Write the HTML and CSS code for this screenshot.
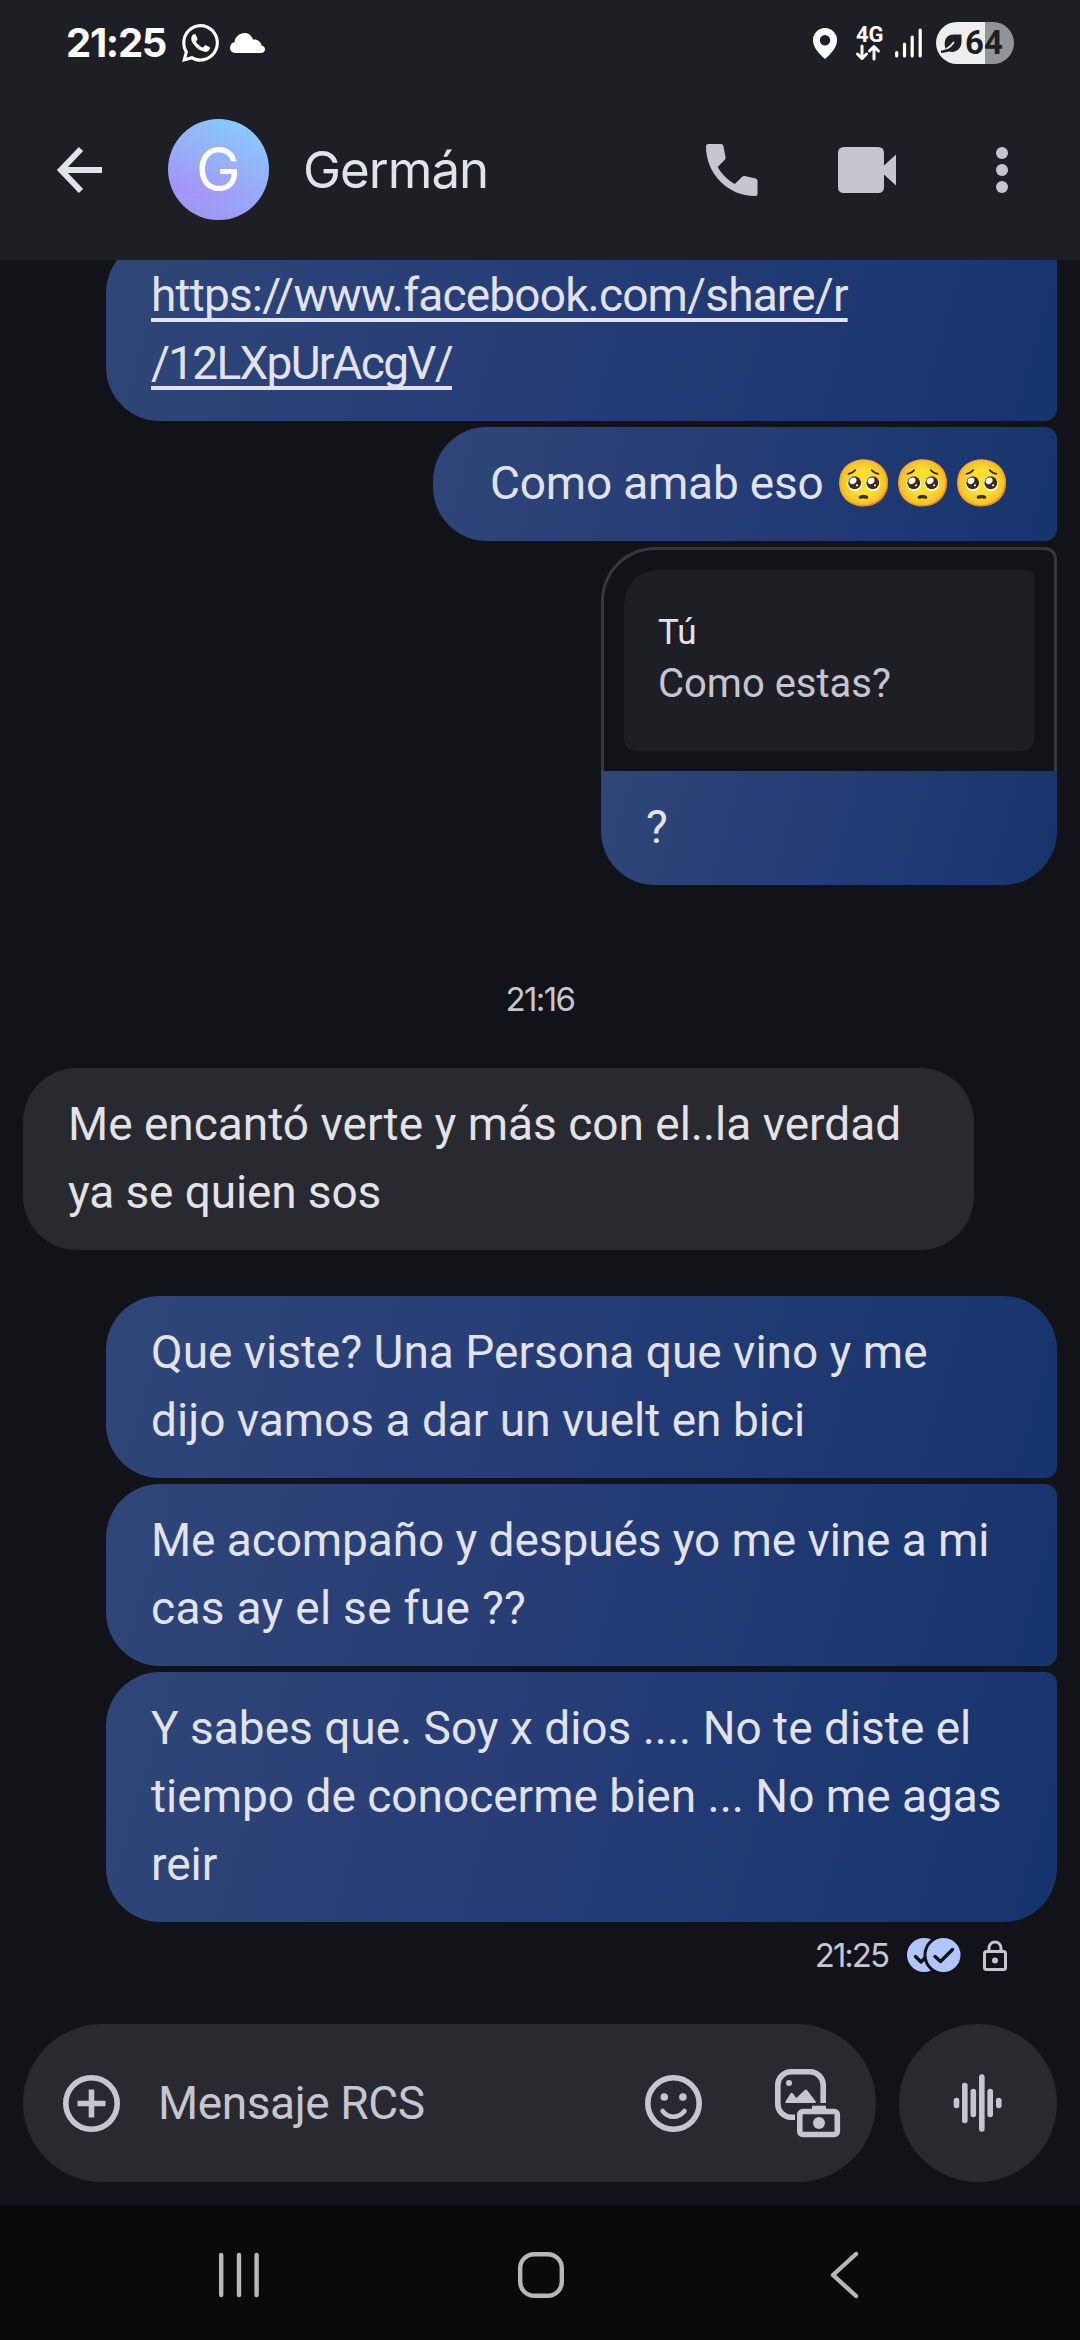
FILE: index.html
```html
<!DOCTYPE html>
<html lang="es">
<head>
<meta charset="utf-8">
<title>Germán</title>
<link rel="stylesheet" href="styles.css">
</head>
<body>
<div class="phone">
  <header class="header">
    <div class="status">
      <span class="clock">21:25</span>
      <svg class="wa" width="37" height="38" viewBox="0 0 24 24" preserveAspectRatio="none"><path d="M.057 24l1.687-6.163c-1.041-1.804-1.588-3.849-1.587-5.946.003-6.556 5.338-11.891 11.893-11.891 3.181.001 6.167 1.24 8.413 3.488 2.245 2.248 3.481 5.236 3.48 8.414-.003 6.557-5.338 11.892-11.893 11.892-1.99-.001-3.951-.5-5.688-1.448l-6.305 1.654zm6.597-3.807c1.676.995 3.276 1.591 5.392 1.592 5.448 0 9.886-4.434 9.889-9.885.002-5.462-4.415-9.89-9.881-9.892-5.452 0-9.887 4.434-9.889 9.884-.001 2.225.651 3.891 1.746 5.634l-.999 3.648 3.742-.981zm11.387-5.464c-.074-.124-.272-.198-.57-.347-.297-.149-1.758-.868-2.031-.967-.272-.099-.47-.149-.669.149-.198.297-.768.967-.941 1.165-.173.198-.347.223-.644.074-.297-.149-1.255-.462-2.39-1.475-.883-.788-1.48-1.761-1.653-2.059-.173-.297-.018-.458.13-.606.134-.133.297-.347.446-.521.151-.172.2-.296.3-.495.099-.198.05-.372-.025-.521-.075-.148-.669-1.611-.916-2.206-.242-.579-.487-.501-.669-.51l-.57-.01c-.198 0-.52.074-.792.372s-1.04 1.016-1.04 2.479 1.065 2.876 1.213 3.074c.149.198 2.095 3.2 5.076 4.487.709.306 1.263.489 1.694.626.712.226 1.36.194 1.872.118.571-.085 1.758-.719 2.006-1.413.248-.695.248-1.29.173-1.414z"/></svg>
      <svg class="cloud" width="35" height="20" viewBox="0 0 35 20"><path d="M5 20A5 5 0 0 1 0 15C0 11.800 1.800 9.500 4.500 9.200C5 4 9.500 0 14.800 0C18.500 0 21.600 2.600 23 6.500C27.500 6 31 8.800 31.600 12.500C33.700 12.800 35 14.300 35 16.300C35 18.500 33.400 20 31.300 20Z"/></svg>
      <svg class="pin" width="24" height="31" viewBox="0 0 24 31"><path fill-rule="evenodd" d="M12 0A12 12 0 0 1 24 12.500C24 18 20 24 12 31C4 24 0 18 0 12.500A12 12 0 0 1 12 0ZM12 7A5.200 5.200 0 0 0 12 17.400A5.200 5.200 0 0 0 12 7Z"/></svg>
      <div class="net"><span>4G</span>
        <svg width="24" height="15" viewBox="0 0 24 15"><path class="line" d="M6 1V13.500M1.500 9L6 13.500L10.500 9M18 14V1.500M13.500 6L18 1.500L22.500 6"/></svg>
      </div>
      <svg class="bars" width="27" height="30" viewBox="0 0 27 30"><path class="line" d="M1.700 24.500V28M9.500 16V28M17.200 9V28M25.200 2V28"/></svg>
      <div class="battery">
        <svg width="21" height="19" viewBox="0 0 21 19"><path d="M4 13C2.500 5 6.500 .5 13 .5H20.500V8C20.500 15 14 19.500 8 17.500C5.500 18 3.500 18.800 0 19V16.500Q2.500 16.500 5 15.200Z"/><path class="vein" d="M6 14.500Q10 12.500 12.500 8.500"/></svg>
        <span>64</span>
      </div>
    </div>
    <div class="toolbar">
      <svg width="46" height="46" viewBox="0 0 46 46"><path class="back" d="M45 23H4M24 2L4 23L24 44"/></svg>
      <div class="avatar">G</div>
      <h1 class="name">Germán</h1>
      <div class="actions">
        <svg width="52" height="52" viewBox="0 0 52 52"><path d="M2.500 0H15Q17 0 17.400 2L19.600 13.500Q19.800 14.800 18.800 15.800L11.700 23C16 30.500 21.500 36 28.900 40L36.200 32.800Q37.200 31.800 38.500 32.100L49.600 34.400Q51.500 34.900 51.500 36.800V49.500Q51.500 52 49 52C22 52 0 30 0 2.500Q0 0 2.500 0Z"/></svg>
        <svg width="58" height="46" viewBox="0 0 58 46"><path d="M6 0H40Q46 0 46 6V18.500L58 7.500V38.500L46 27.500V40Q46 46 40 46H6Q0 46 0 40V6Q0 0 6 0Z"/></svg>
        <svg width="12" height="46" viewBox="0 0 12 46"><circle cx="6" cy="6" r="6"/><circle cx="6" cy="23" r="6"/><circle cx="6" cy="40" r="6"/></svg>
      </div>
    </div>
  </header>

  <main class="chat">
    <div class="bubble out top-cut"><a class="l-url1">https://www.facebook.com/share/r</a><br><a class="l-url2">/12LXpUrAcgV/</a></div>
    <div class="bubble out join short"><span class="l-amab">Como amab eso</span> <span class="emoji">🥺🥺🥺</span></div>
    <div class="reply">
      <div class="quote-frame">
        <div class="quote">
          <div class="quote-name">Tú</div>
          <div class="quote-text">Como estas?</div>
        </div>
      </div>
      <div class="bubble out reply-text">?</div>
    </div>
    <div class="time-sep">21:16</div>
    <div class="bubble in">Me encantó verte y más con el..la verdad<br><span class="l-quien">ya se quien sos</span></div>
    <div class="bubble out first">Que viste? Una Persona que vino y me<br>dijo vamos a dar un vuelt en bici</div>
    <div class="bubble out join"><span class="l-acomp">Me acompaño y después yo me vine a mi</span><br><span class="l-cas">cas ay el se fue ??</span></div>
    <div class="bubble out last">Y sabes que. Soy x dios .... No te diste el<br>tiempo de conocerme bien ... No me agas<br>reir</div>
    <div class="receipt">
      <span>21:25</span>
      <svg class="checks" width="54" height="34" viewBox="0 0 54 34"><circle cx="17" cy="17" r="17"/><path class="tick" d="M8.500 18.500L14 24L26 11.500"/><circle class="ring" cx="36.500" cy="17" r="18.500"/><path class="tick" d="M28 18.500L33.500 23.500L45.500 11.500"/></svg>
      <svg width="24" height="31" viewBox="0 0 24 31"><rect class="lock" x="1.500" y="11.500" width="21" height="18" rx="2"/><path class="lock" d="M6 11.500V8A6 6 0 0 1 18 8V11.500"/><circle cx="12" cy="20.500" r="3"/></svg>
    </div>
  </main>

  <div class="composer">
    <div class="input">
      <svg width="57" height="57" viewBox="0 0 57 57"><circle class="ico" cx="28.500" cy="28.500" r="25.700"/><path class="ico" d="M28.500 14.500V42.500M14.500 28.500H42.500"/></svg>
      <span class="hint">Mensaje RCS</span>
      <svg class="smile" width="57" height="57" viewBox="0 0 57 57"><circle class="ico" cx="28.500" cy="28.500" r="25.700"/><circle cx="19.300" cy="22" r="3.800"/><circle cx="37.900" cy="22" r="3.800"/><path class="grin" d="M17.500 36Q22 41.700 28.500 41.700T39.500 36"/></svg>
      <svg width="65" height="68" viewBox="0 0 65 68"><path class="ico" d="M48.200 34V16A13.200 13.200 0 0 0 35 2.800H16A13.200 13.200 0 0 0 2.800 16V35A13.200 13.200 0 0 0 16 48.200H20"/><circle cx="14" cy="14" r="3"/><path d="M11.500 34Q9.500 34 10.600 32.300L15.500 24.500Q16.700 23 17.900 24.500L21.300 29L29.500 21.300Q31 19.800 32.400 21.500L40.400 32Q41.600 34 39.500 34Z"/><rect class="ico" x="24.800" y="42.500" width="37.500" height="23" rx="3"/><rect x="37" y="36.700" width="14" height="5"/><circle cx="44" cy="54" r="6"/></svg>
    </div>
    <div class="voice">
      <svg width="50" height="58" viewBox="0 0 50 58"><path class="ico" d="M3.500 26.500V31.500M11.800 11.500V46.500M20.300 17.500V40.500M28.800 3V55M37.200 17.500V40.500M45.800 26.500V31.500"/></svg>
    </div>
  </div>

  <nav class="nav">
    <svg width="40" height="44" viewBox="0 0 40 44"><path class="nv" d="M2.200 2V42M20 2V42M37.600 2V42"/></svg>
    <svg class="home" width="46" height="46" viewBox="0 0 46 46"><rect class="nv" x="2.200" y="2.200" width="41.600" height="41.600" rx="14"/></svg>
    <svg width="29" height="46" viewBox="0 0 29 46"><path class="nv" d="M26 2L3 23L26 44"/></svg>
  </nav>
</div>
</body>
</html>
```
FILE: styles.css
```css
* { box-sizing: border-box; }

body {
  margin: 0;
  background: #111318;
  color: #e3e2e6;
  font-family: Roboto, "Noto Color Emoji", sans-serif;
}

svg { display: block; flex: none; fill: #c6c6d0; overflow: visible; }

.phone {
  width: 1080px;
  height: 2340px;
  display: flex;
  flex-direction: column;
  overflow: hidden;
}

/* header */
.header { height: 260px; flex: none; background: #1e1f24; position: relative; z-index: 1; }

.status {
  height: 86px;
  padding: 0 66px 0 66px;
  display: flex;
  align-items: center;
}
.status svg { fill: #fff; }
.clock {
  width: 116px;
  font: 700 40px/86px Inter, sans-serif;
  letter-spacing: -1.3px;
  color: #fff;
}
.cloud { margin-left: 11px; }
.pin { margin-left: auto; }
.net { width: 26px; margin-left: 19px; color: #fff; font-weight: 700; font-size: 22px; line-height: 17px; }
.net span { display: block; }
.net svg { margin-top: 2px; }
.line { fill: none; stroke: #fff; stroke-width: 3; stroke-linecap: round; stroke-linejoin: round; }
.bars { margin-left: 13px; }
.bars .line { stroke-width: 3.2; }
.battery {
  width: 78px;
  height: 42px;
  margin-left: 14px;
  padding-left: 5px;
  border-radius: 21px;
  background: linear-gradient(90deg, #eee 49px, #939495 49px);
  display: flex;
  align-items: center;
  gap: 3px;
  color: #1e1f24;
  font-weight: 700;
  font-size: 33px;
  line-height: 42px;
}
.battery svg { fill: #1e1f24; }
.battery .vein { fill: none; stroke: #eee; stroke-width: 1.8; stroke-linecap: round; }

.toolbar { height: 168px; padding: 0 72px 0 57px; display: flex; align-items: center; }
.back { fill: none; stroke: #e3e2e6; stroke-width: 6; }
.avatar {
  width: 101px;
  height: 101px;
  margin: 0 0 1px 65px;
  border-radius: 50%;
  background:
    radial-gradient(circle at 48% -12%, transparent 94px, rgba(130, 200, 250, .18) 95px),
    linear-gradient(205deg, #86cdfb 8%, #9aa9f8 52%, #a98af6 88%);
  color: #fff;
  font: 400 60px/100px Inter, sans-serif;
  text-align: center;
}
.name { margin: 0 0 0 34px; font: 400 51px/100px Inter, sans-serif; letter-spacing: -1px; }
.actions { margin-left: auto; display: flex; align-items: center; }
.actions svg + svg { margin-left: 80px; }
.actions svg:last-child { margin-left: 100px; }

/* conversation */
.chat {
  flex: 1;
  min-height: 0;
  padding: 0 23px;
  display: flex;
  flex-direction: column;
  align-items: flex-end;
}
.bubble {
  width: 951px;
  flex: none;
  padding: 22px 0 24px 45px;
  border-radius: 54px;
  font-size: 46px;
  line-height: 68px;
  white-space: nowrap;
}
.out { background: linear-gradient(106deg, #2f4678 0%, #263d76 45%, #17356d 97%); color: #e1e2ee; }
.in { background: #292a2f; align-self: flex-start; }
.top-cut { margin-top: -21px; border-radius: 54px 12px 12px 54px; }
.join { margin-top: 6px; border-radius: 54px 12px 12px 54px; }
.first { margin-top: 46px; border-radius: 54px 54px 12px 54px; }
.last { margin-top: 6px; border-radius: 54px 12px 54px 54px; }
.short { width: 624px; height: 114px; padding-left: 57px; }
.bubble a { text-decoration: underline 4px; text-decoration-skip-ink: none; text-underline-offset: 7px; }
.l-url1 { letter-spacing: -.83px; }
.l-url2 { letter-spacing: -1.75px; }
.l-amab { letter-spacing: -.2px; }
.l-quien { letter-spacing: -.12px; }
.l-acomp { letter-spacing: -.08px; }
.l-cas { letter-spacing: .3px; }
.emoji { letter-spacing: 2px; line-height: 1; }

.reply { width: 456px; margin-top: 6px; flex: none; }
.quote-frame {
  height: 224px;
  padding: 20px;
  border: 3px solid #37383c;
  border-bottom: 0;
  border-radius: 54px 12px 0 0;
}
.quote {
  height: 181px;
  padding: 40px 33px 0 34px;
  border-radius: 34px 6px 12px 12px;
  background: #1e1f24;
}
.quote-name { font-size: 35px; line-height: 46px; }
.quote-text { font-size: 40px; line-height: 55px; color: #c6c6d0; }
.reply-text { width: 100%; border-radius: 0 0 54px 54px; }

.time-sep {
  align-self: stretch;
  margin: 91px 0 45px;
  text-align: center;
  font: 400 33px/47px Inter, sans-serif;
  letter-spacing: -1.6px;
  color: #c6c6d0;
}

.receipt {
  height: 34px;
  margin: 16px 50px 0 0;
  display: flex;
  align-items: center;
  font: 400 33px/34px Inter, sans-serif;
  letter-spacing: -2px;
  color: #c6c6d0;
}
.checks { margin: 0 22px 0 19px; fill: #b1c5ff; }
.tick { fill: none; stroke: #111318; stroke-width: 3.4; stroke-linecap: round; stroke-linejoin: round; }
.ring { stroke: #111318; stroke-width: 3; }
.lock { fill: none; stroke: #c6c6d0; stroke-width: 3; }

/* composer */
.composer { height: 181px; flex: none; padding: 0 23px; display: flex; gap: 23px; }
.input {
  width: 853px;
  height: 158px;
  padding: 0 36px 0 40px;
  border-radius: 79px;
  background: #292a2f;
  display: flex;
  align-items: center;
}
.hint { margin-left: 38px; font-size: 46px; line-height: 68px; letter-spacing: -.4px; color: #c6c6d0; }
.smile { margin: 0 73px 0 auto; }
.voice {
  width: 158px;
  height: 158px;
  border-radius: 50%;
  background: #292a2f;
  display: flex;
  align-items: center;
  justify-content: center;
}
.ico { fill: none; stroke: #c6c6d0; stroke-width: 5.600; }
.voice .ico, .grin { stroke-linecap: round; }
.grin { fill: none; stroke: #c6c6d0; stroke-width: 4.500; }

/* system navigation */
.nav {
  height: 135px;
  flex: none;
  padding: 5px 221px 0 219px;
  background: #0a0a0c;
  display: flex;
  align-items: center;
  justify-content: space-between;
}
.home { margin-right: 7px; }
.nv { fill: none; stroke: #b8b8b8; stroke-width: 4.400; stroke-linecap: round; stroke-linejoin: round; }
```
